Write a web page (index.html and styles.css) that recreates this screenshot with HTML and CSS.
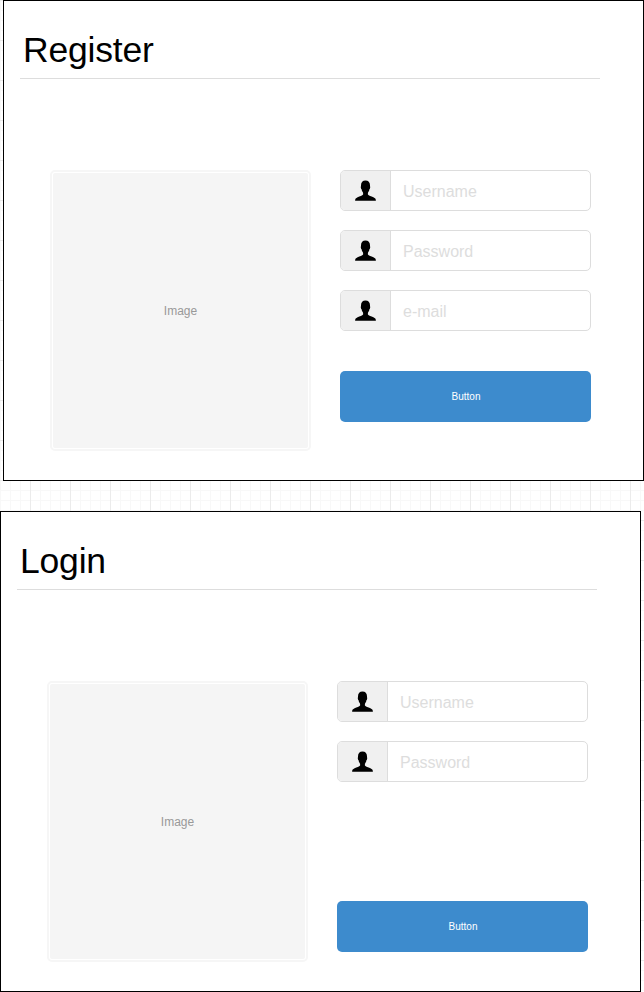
FILE: index.html
```html
<!DOCTYPE html>
<html lang="en">
<head>
<meta charset="utf-8">
<title>Register and Login</title>
<link rel="stylesheet" href="styles.css">
</head>
<body>
<svg class="defs" width="0" height="0" aria-hidden="true">
  <symbol id="user" viewBox="0.5 0 22 22">
    <path d="M11 .5C8.200 .5 6.500 2.500 6.500 5.200C6.500 6.200 6.300 6.700 6.300 7.400C6.300 8.300 6.800 8.900 7.100 9.300C7.300 11 8 12 8.600 12.700V14.500C7.900 15.800 5.300 16.300 3.100 17.300C1.300 18.100 .6 19 .6 20.700H21.400C21.400 19 20.700 18.100 18.900 17.300C16.700 16.300 14.100 15.800 13.400 14.500V12.700C14 12 14.700 11 14.900 9.300C15.200 8.900 15.700 8.300 15.700 7.400C15.700 6.700 15.500 6.200 15.500 5.200C15.500 2.500 13.800 .5 11 .5Z"/>
  </symbol>
</svg>
<main class="canvas">
  <section class="panel register">
    <h1 class="title">Register</h1>
    <div class="content">
      <div class="image"><span>Image</span></div>
      <div class="form">
        <div class="field"><span class="addon"><svg class="icon"><use href="#user"/></svg></span><span class="placeholder">Username</span></div>
        <div class="field"><span class="addon"><svg class="icon"><use href="#user"/></svg></span><span class="placeholder">Password</span></div>
        <div class="field"><span class="addon"><svg class="icon"><use href="#user"/></svg></span><span class="placeholder">e-mail</span></div>
        <button class="button" type="button">Button</button>
      </div>
    </div>
  </section>
  <section class="panel login">
    <h1 class="title">Login</h1>
    <div class="content">
      <div class="image"><span>Image</span></div>
      <div class="form">
        <div class="field"><span class="addon"><svg class="icon"><use href="#user"/></svg></span><span class="placeholder">Username</span></div>
        <div class="field"><span class="addon"><svg class="icon"><use href="#user"/></svg></span><span class="placeholder">Password</span></div>
        <button class="button" type="button">Button</button>
      </div>
    </div>
  </section>
</main>
</body>
</html>
```
FILE: styles.css
```css
* { box-sizing: border-box; }

body {
  margin: 0;
  font-family: "Liberation Sans", Arial, sans-serif;
}

.defs { display: block; }

.canvas {
  display: flex;
  flex-direction: column;
  align-items: flex-start;
  gap: 30px;
  height: 992px;
  overflow: hidden;
  background-color: #fff;
  background-image:
    linear-gradient(to right, #ebebeb 1px, transparent 1px),
    linear-gradient(to bottom, #ebebeb 1px, transparent 1px),
    linear-gradient(to right, #f8f8f8 1px, transparent 1px),
    linear-gradient(to bottom, #f8f8f8 1px, transparent 1px);
  background-size: 40px 40px, 40px 40px, 10px 10px, 10px 10px;
  background-position: 30px 0, 0 0, 0 0, 0 0;
}

.panel {
  flex: none;
  width: 641px;
  height: 481px;
  padding: 0 0 0 16px;
  border: 1px solid #000;
  background: #fff;
}

.register { margin-left: 3px; }

.title {
  width: 580px;
  height: 78px;
  margin: 0;
  padding: 29px 0 0 3px;
  border-bottom: 1px solid #ddd;
  font-size: 35.5px;
  font-weight: 400;
  line-height: 41px;
  letter-spacing: -0.2px;
  color: #000;
}

.content {
  display: flex;
  gap: 29px;
  padding: 91px 0 0 30px;
}

.image {
  display: flex;
  align-items: center;
  justify-content: center;
  width: 261px;
  height: 281px;
  border: 2px solid #f6f6f6;
  border-radius: 5px;
  padding: 1px;
  background: #f5f5f5 content-box;
  font-size: 12px;
  color: #999;
}

.form {
  display: flex;
  flex-direction: column;
  gap: 19px;
  width: 251px;
  height: 281px;
}

.field {
  display: flex;
  flex: none;
  height: 41px;
  border: 1px solid #ddd;
  border-radius: 5px;
  background: #fff;
  overflow: hidden;
}

.addon {
  display: flex;
  align-items: center;
  justify-content: center;
  width: 50px;
  border-right: 1px solid #ddd;
  background: #f0f0f0;
}

.icon {
  width: 22px;
  height: 22px;
  fill: #000;
}

.placeholder {
  padding-left: 12px;
  font-size: 16px;
  line-height: 41px;
  color: #ddd;
}

.button {
  flex: none;
  height: 51px;
  margin: 21px 0 0;
  padding: 0 0 0 1px;
  border: 0;
  border-radius: 5px;
  background: #3d8bcd;
  color: #fff;
  font-family: inherit;
  font-size: 10px;
}

.login .button { margin-top: 100px; }
```
